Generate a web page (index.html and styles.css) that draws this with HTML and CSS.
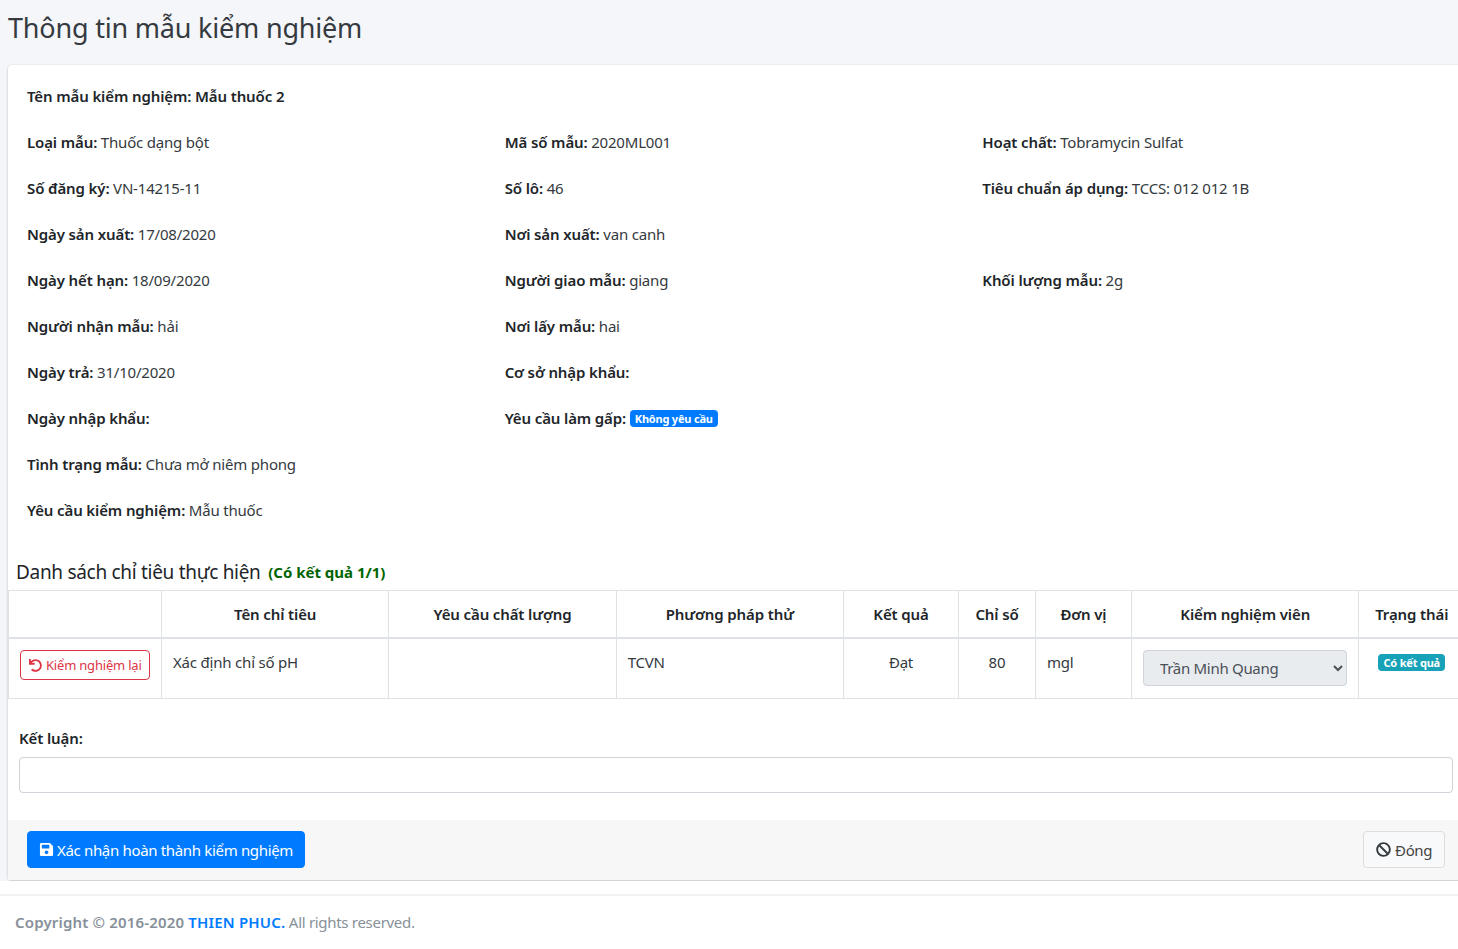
FILE: index.html
```html
<!DOCTYPE html>
<html lang="vi">
<head>
    <meta charset="UTF-8">
    <meta name="viewport" content="width=device-width, initial-scale=1.0">
    <title>Thông tin mẫu kiểm nghiệm</title>
    <link rel="stylesheet" href="styles.css">
</head>
<body>
    <div class="content-wrapper">
        <h3 class="page-title">Thông tin mẫu kiểm nghiệm</h3>
        <div class="card">
            <div class="info-grid">
                <div class="info-full title-row"><b>Tên mẫu kiểm nghiệm: Mẫu thuốc 2</b></div>

                <div><b>Loại mẫu:</b> Thuốc dạng bột</div>
                <div><b>Mã số mẫu:</b> 2020ML001</div>
                <div><b>Hoạt chất:</b> Tobramycin Sulfat</div>

                <div><b>Số đăng ký:</b> VN-14215-11</div>
                <div><b>Số lô:</b> 46</div>
                <div><b>Tiêu chuẩn áp dụng:</b> TCCS: 012 012 1B</div>

                <div><b>Ngày sản xuất:</b> 17/08/2020</div>
                <div><b>Nơi sản xuất:</b> van canh</div>
                <div></div>

                <div><b>Ngày hết hạn:</b> 18/09/2020</div>
                <div><b>Người giao mẫu:</b> giang</div>
                <div><b>Khối lượng mẫu:</b> 2g</div>

                <div><b>Người nhận mẫu:</b> hải</div>
                <div><b>Nơi lấy mẫu:</b> hai</div>
                <div></div>

                <div><b>Ngày trả:</b> 31/10/2020</div>
                <div><b>Cơ sở nhập khẩu:</b></div>
                <div></div>

                <div><b>Ngày nhập khẩu:</b></div>
                <div><b>Yêu cầu làm gấp:</b> <span class="badge badge-primary">Không yêu cầu</span></div>
                <div></div>

                <div class="info-full"><b>Tình trạng mẫu:</b> Chưa mở niêm phong</div>
                <div class="info-full"><b>Yêu cầu kiểm nghiệm:</b> Mẫu thuốc</div>
            </div>

            <h5 class="list-title">Danh sách chỉ tiêu thực hiện <small class="result-count">(Có kết quả 1/1)</small></h5>

            <table class="table">
                <colgroup>
                    <col class="col-action">
                    <col class="col-wide">
                    <col class="col-wide">
                    <col class="col-wide">
                    <col class="col-result">
                    <col class="col-index">
                    <col class="col-unit">
                    <col class="col-tester">
                    <col class="col-status">
                </colgroup>
                <thead>
                    <tr>
                        <th></th>
                        <th>Tên chỉ tiêu</th>
                        <th>Yêu cầu chất lượng</th>
                        <th>Phương pháp thử</th>
                        <th>Kết quả</th>
                        <th>Chỉ số</th>
                        <th>Đơn vị</th>
                        <th>Kiểm nghiệm viên</th>
                        <th>Trạng thái</th>
                    </tr>
                </thead>
                <tbody>
                    <tr>
                        <td>
                            <button class="btn btn-retest">
                                <svg class="icon" viewBox="0 0 512 512"><path fill="currentColor" d="M212.333 224.333H12c-6.627 0-12-5.373-12-12V12C0 5.373 5.373 0 12 0h48c6.627 0 12 5.373 12 12v78.112C117.773 39.279 184.26 7.47 258.175 8.007c136.906.994 246.448 111.623 246.157 248.532C504.041 393.258 393.12 504 256.333 504c-64.089 0-122.496-24.313-166.51-64.215-5.099-4.622-5.334-12.554-.467-17.42l33.967-33.967c4.474-4.474 11.662-4.717 16.401-.525C170.76 415.336 211.58 432 256.333 432c97.268 0 176-78.716 176-176 0-97.267-78.716-176-176-176-58.496 0-110.28 28.476-142.274 72.333h98.274c6.627 0 12 5.373 12 12v48c0 6.627-5.373 12-12 12z"/></svg>
                                Kiểm nghiệm lại
                            </button>
                        </td>
                        <td>Xác định chỉ số pH</td>
                        <td></td>
                        <td>TCVN</td>
                        <td class="text-center">Đạt</td>
                        <td class="text-center">80</td>
                        <td>mgl</td>
                        <td>
                            <select class="form-select" disabled>
                                <option>Trần Minh Quang</option>
                            </select>
                        </td>
                        <td class="text-center"><span class="badge badge-info">Có kết quả</span></td>
                    </tr>
                </tbody>
            </table>

            <div class="conclusion">
                <label class="conclusion-label" for="ketluan">Kết luận:</label>
                <input class="form-input" id="ketluan" type="text">
            </div>

            <div class="card-footer">
                <button class="btn btn-primary">
                    <svg class="icon" viewBox="0 0 448 512"><path fill="currentColor" d="M433.941 129.941l-83.882-83.882A48 48 0 0 0 316.118 32H48C21.49 32 0 53.49 0 80v352c0 26.51 21.49 48 48 48h352c26.51 0 48-21.49 48-48V163.882a48 48 0 0 0-14.059-33.941zM224 416c-35.346 0-64-28.654-64-64 0-35.346 28.654-64 64-64s64 28.654 64 64c0 35.346-28.654 64-64 64zm96-304.52V212c0 6.627-5.373 12-12 12H76c-6.627 0-12-5.373-12-12V108c0-6.627 5.373-12 12-12h228.52c3.183 0 6.235 1.264 8.485 3.515l3.48 3.48A11.996 11.996 0 0 1 320 111.48z"/></svg>
                    Xác nhận hoàn thành kiểm nghiệm
                </button>
                <button class="btn btn-close">
                    <svg class="icon" viewBox="0 0 512 512"><path fill="currentColor" d="M256 8C119.034 8 8 119.033 8 256s111.034 248 248 248 248-111.034 248-248S392.967 8 256 8zm130.108 117.892c65.448 65.448 70 165.481 20.677 235.637L150.47 105.216c70.204-49.356 170.226-44.735 235.638 20.676zM125.892 386.108c-65.448-65.448-70-165.481-20.677-235.637L361.53 406.784c-70.203 49.356-170.226 44.736-235.638-20.676z"/></svg>
                    Đóng
                </button>
            </div>
        </div>
    </div>

    <footer class="main-footer">
        <b>Copyright © 2016-2020 <a href="#">THIEN PHUC.</a></b> All rights reserved.
    </footer>
</body>
</html>
```

FILE: styles.css
```css
body {
    font-family: "Noto Sans", "Open Sans", sans-serif;
    font-size: 15px;
    line-height: 24px;
    letter-spacing: -0.2px;
    color: #212529;
    background-color: #fff;
    margin: 0;
    overflow-x: hidden;
}
b {
    font-weight: 600;
    letter-spacing: -0.12px;
}
.content-wrapper {
    background-color: #f4f6f9;
    width: 1458px;
    overflow: hidden;
    padding-bottom: 1px;
}
.page-title {
    font-size: 27px;
    font-weight: 400;
    line-height: 34px;
    letter-spacing: -0.2px;
    color: #343a40;
    margin: 0;
    padding: 11px 8px 20px;
}
.card {
    width: 1456px;
    margin-left: 8px;
    background-color: #fff;
    border-radius: 4px;
    box-shadow: 0 0 1px rgba(0, 0, 0, 0.125), 0 1px 3px rgba(0, 0, 0, 0.2);
}
.info-grid {
    display: grid;
    grid-template-columns: repeat(3, 477.67px);
    grid-auto-rows: 46px;
    padding: 19px 0 0 19px;
    color: #343a40;
}
.info-grid b {
    color: #212529;
}
.info-full {
    grid-column: 1 / -1;
}
.badge {
    display: inline-block;
    font-size: 11px;
    font-weight: 700;
    line-height: 1;
    padding: 3px 5px;
    border-radius: 4px;
    color: #fff;
    vertical-align: 1px;
}
.badge-primary {
    background-color: #007bff;
}
.badge-info {
    background-color: #17a2b8;
    margin-top: 4px;
    vertical-align: top;
}
.list-title {
    font-size: 19px;
    font-weight: 400;
    line-height: 24px;
    letter-spacing: -0.3px;
    color: #212529;
    margin: 0;
    padding: 16px 0 6px 8px;
}
.result-count {
    font-size: 15px;
    font-weight: 700;
    letter-spacing: 0;
    color: #006400;
    margin-left: 3px;
    vertical-align: 1px;
}
.table {
    table-layout: fixed;
    width: 1456px;
    border-collapse: collapse;
    color: #343a40;
}
.col-action {
    width: 153px;
}
.col-wide {
    width: 227.33px;
}
.col-result {
    width: 115px;
}
.col-index {
    width: 77px;
}
.col-unit {
    width: 96px;
}
.col-tester {
    width: 227.5px;
}
.col-status {
    width: 105.5px;
}
th, td {
    border: 1px solid #dee2e6;
    vertical-align: top;
    text-align: left;
}
th {
    padding: 11px;
    font-weight: 600;
    letter-spacing: -0.12px;
    color: #212529;
    text-align: center;
    vertical-align: middle;
    border-bottom-width: 2px;
    height: 24px;
}
td {
    padding: 11px 11px 12px;
}
.text-center {
    text-align: center;
}
.btn {
    display: inline-flex;
    align-items: center;
    gap: 4px;
    font-family: inherit;
    border-radius: 4px;
    border: 1px solid transparent;
    cursor: pointer;
    white-space: nowrap;
}
.icon {
    width: 1em;
    height: 1em;
    flex: none;
}
.btn-retest {
    font-size: 13px;
    line-height: 20px;
    letter-spacing: -0.2px;
    height: 30px;
    width: 130px;
    padding: 0 8px;
    color: #dc3545;
    background-color: #fff;
    border-color: #dc3545;
}
.form-select {
    width: 204px;
    height: 36px;
    font-family: inherit;
    font-size: 15px;
    letter-spacing: -0.3px;
    color: #495057;
    background-color: #e9ecef;
    border: 1px solid #ced4da;
    border-radius: 4px;
    padding: 0 12px;
    opacity: 1;
    display: block;
}
.conclusion {
    padding: 27px 11px 27px;
}
.conclusion-label {
    display: block;
    font-weight: 600;
    letter-spacing: -0.12px;
    margin-bottom: 7px;
}
.form-input {
    display: block;
    box-sizing: border-box;
    width: 100%;
    height: 36px;
    border: 1px solid #ced4da;
    border-radius: 4px;
    background-color: #fff;
}
.card-footer {
    display: flex;
    justify-content: space-between;
    height: 60px;
    box-sizing: border-box;
    padding: 11px 19px;
    background-color: #f7f7f7;
}
.btn-primary {
    font-size: 15px;
    letter-spacing: -0.33px;
    gap: 3px;
    height: 37px;
    padding: 0 11px;
    color: #fff;
    background-color: #007bff;
    border-color: #007bff;
}
.btn-close {
    font-size: 15px;
    letter-spacing: -0.4px;
    height: 37px;
    padding: 0 12px;
    color: #444;
    background-color: #f8f9fa;
    border-color: #ddd;
}
.btn-close .icon {
    width: 15px;
    height: 15px;
    color: #343a40;
}
.main-footer {
    margin-top: 13px;
    border-top: 2px solid #f2f2f2;
    padding: 14px 15px;
    font-size: 15px;
    letter-spacing: -0.3px;
    color: #869099;
}
.main-footer b {
    letter-spacing: 0.17px;
}
.main-footer a {
    color: #007bff;
    text-decoration: none;
}
```
